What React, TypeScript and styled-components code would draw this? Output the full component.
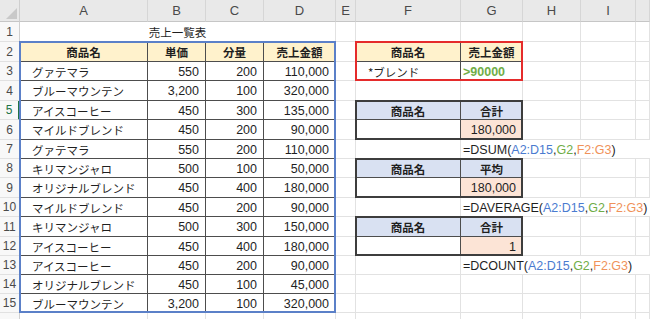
import React from "react";
import styled, { createGlobalStyle } from "styled-components";

const COL_WIDTHS = [20, 128, 58, 58, 72, 20, 105, 62, 58, 55];
const ROW_HEIGHTS = [20, 20, 19, 20, 19, 20, 19, 19, 20, 19, 20, 19, 19, 19, 19, 20];
const LETTERS = ["A", "B", "C", "D", "E", "F", "G", "H", "I", "J"];
const ACTIVE_ROW = 5;

// grid column for a sheet column letter (column 1 is the row header)
const col = (letter: string) => LETTERS.indexOf(letter) + 2;

const sales: [string, string, string, string][] = [
	["グァテマラ", "550", "200", "110,000"],
	["ブルーマウンテン", "3,200", "100", "320,000"],
	["アイスコーヒー", "450", "300", "135,000"],
	["マイルドブレンド", "450", "200", "90,000"],
	["グァテマラ", "550", "200", "110,000"],
	["キリマンジャロ", "500", "100", "50,000"],
	["オリジナルブレンド", "450", "400", "180,000"],
	["マイルドブレンド", "450", "200", "90,000"],
	["キリマンジャロ", "500", "300", "150,000"],
	["アイスコーヒー", "450", "400", "180,000"],
	["アイスコーヒー", "450", "200", "90,000"],
	["オリジナルブレンド", "450", "100", "45,000"],
	["ブルーマウンテン", "3,200", "100", "320,000"],
];

const summaries = [
	{ row: 5, label: "合計", value: "180,000", fn: "DSUM" },
	{ row: 8, label: "平均", value: "180,000", fn: "DAVERAGE" },
	{ row: 11, label: "合計", value: "1", fn: "DCOUNT" },
];

function App() {
	const gridCells = [];
	for (let r = 1; r <= ROW_HEIGHTS.length; r++) {
		for (let c = 0; c < LETTERS.length; c++) {
			gridCells.push(<GridCell key={`g${r}-${c}`} $col={c + 2} $row={r} />);
		}
	}

	return (
		<>
			<GlobalStyle />
			<Sheet>
				<Corner />
				{LETTERS.map((l, i) => (
					<ColHeader key={l} $col={i + 2}>
						{l === "J" ? "" : l}
					</ColHeader>
				))}
				{ROW_HEIGHTS.map((_, i) => (
					<RowHeader key={i} $row={i + 1} $active={i + 1 === ACTIVE_ROW}>
						{i + 1 <= 15 ? i + 1 : ""}
					</RowHeader>
				))}
				{gridCells}

				<Cell $col={col("A")} $row={1} $span={4} $align="center" $jp>
					売上一覧表
				</Cell>

				{["商品名", "単価", "分量", "売上金額"].map((h, i) => (
					<Cell key={h} $col={col("A") + i} $row={2} $align="center" $bold $jp $fill="#fff2cc" $line>
						{h}
					</Cell>
				))}
				{sales.map((s, r) => (
					<React.Fragment key={r}>
						<Cell $col={col("A")} $row={r + 3} $indent $jp $line>
							{s[0]}
						</Cell>
						{s.slice(1).map((v, i) => (
							<Cell key={i} $col={col("B") + i} $row={r + 3} $align="right" $line>
								{v}
							</Cell>
						))}
					</React.Fragment>
				))}
				<Box $col={col("A")} $row={2} $cols={4} $rows={14} $color="#5b80c8" />

				<Cell $col={col("F")} $row={2} $align="center" $bold $jp $fill="#fff2cc" $line>
					商品名
				</Cell>
				<Cell $col={col("G")} $row={2} $align="center" $bold $jp $fill="#fff2cc" $line>
					売上金額
				</Cell>
				<Cell $col={col("F")} $row={3} $indent $jp $line>
					*ブレンド
				</Cell>
				<Cell $col={col("G")} $row={3} $bold $color="#70ad47" $line>
					&gt;90000
				</Cell>
				<Box $col={col("F")} $row={2} $cols={2} $rows={2} $color="#e52b2b" />

				{summaries.map((s) => (
					<React.Fragment key={s.row}>
						<Cell $col={col("F")} $row={s.row} $align="center" $bold $jp $fill="#d9e1f2" $line>
							商品名
						</Cell>
						<Cell $col={col("G")} $row={s.row} $align="center" $bold $jp $fill="#d9e1f2" $line>
							{s.label}
						</Cell>
						<Cell $col={col("F")} $row={s.row + 1} $line />
						<Cell $col={col("G")} $row={s.row + 1} $align="right" $fill="#fce4d6" $line>
							{s.value}
						</Cell>
						<Box $col={col("F")} $row={s.row} $cols={2} $rows={2} $color="#3d3d3d" />
						<Formula $row={s.row + 2}>
							={s.fn}(<Ref $color="#4a7bd0">A2:D15</Ref>,<Ref $color="#70ad47">G2</Ref>,
							<Ref $color="#f0925a">F2:G3</Ref>)
						</Formula>
					</React.Fragment>
				))}
			</Sheet>
		</>
	);
}

const GlobalStyle = createGlobalStyle`
	html, body {
		margin: 0;
		padding: 0;
		background: #ffffff;
		overflow: hidden;
	}
`;

const Sheet = styled.div`
	display: grid;
	width: 650px;
	grid-template-columns: ${COL_WIDTHS.map((w) => `${w}px`).join(" ")} 1fr;
	grid-template-rows: 22px ${ROW_HEIGHTS.map((h) => `${h}px`).join(" ")};
	font-family: "Liberation Sans", "Noto Sans CJK JP", sans-serif;
	font-size: 12.5px;
	color: #1f1f1f;
	box-sizing: border-box;

	& * {
		box-sizing: border-box;
	}
`;

const Corner = styled.div`
	grid-column: 1;
	grid-row: 1;
	background: #e9e9e9;
	border-right: 1px solid #cfcfcf;
	border-bottom: 1px solid #c6c6c6;
	position: relative;

	&::after {
		content: "";
		position: absolute;
		right: 2px;
		bottom: 2px;
		width: 11px;
		height: 11px;
		background: #c9c9c9;
		clip-path: polygon(100% 0, 100% 100%, 0 100%);
	}
`;

const ColHeader = styled.div<{ $col: number }>`
	grid-column: ${(p) => p.$col};
	grid-row: 1;
	display: flex;
	align-items: center;
	justify-content: center;
	background: #e9e9e9;
	border-right: 1px solid #d6d6d6;
	border-bottom: 1px solid #c6c6c6;
	color: #4a4a4a;
	font-size: 13px;
`;

const RowHeader = styled.div<{ $row: number; $active: boolean }>`
	grid-column: 1;
	grid-row: ${(p) => p.$row + 1};
	display: flex;
	align-items: center;
	justify-content: center;
	background: #f8f8f8;
	border-bottom: 1px solid #e1e1e1;
	border-right: ${(p) => (p.$active ? "2px solid #217346" : "1px solid #cfcfcf")};
	color: ${(p) => (p.$active ? "#217346" : "#4a4a4a")};
	font-size: 12px;
`;

const GridCell = styled.div<{ $col: number; $row: number }>`
	grid-column: ${(p) => p.$col};
	grid-row: ${(p) => p.$row + 1};
	border-right: 1px solid #e2e2e2;
	border-bottom: 1px solid #e2e2e2;
`;

const Cell = styled.div<{
	$col: number;
	$row: number;
	$span?: number;
	$align?: "left" | "center" | "right";
	$bold?: boolean;
	$jp?: boolean;
	$indent?: boolean;
	$fill?: string;
	$color?: string;
	$line?: boolean;
}>`
	grid-column: ${(p) => p.$col} / span ${(p) => p.$span ?? 1};
	grid-row: ${(p) => p.$row + 1};
	display: flex;
	align-items: center;
	justify-content: ${(p) =>
		p.$align === "center" ? "center" : p.$align === "right" ? "flex-end" : "flex-start"};
	padding: 1px ${(p) => (p.$align === "right" ? "6px" : "2px")} 0
		${(p) => (p.$indent ? "12px" : "2px")};
	background: ${(p) => p.$fill ?? "#ffffff"};
	border-right: 1px solid ${(p) => (p.$line ? "#4d4d4d" : "#e2e2e2")};
	border-bottom: 1px solid ${(p) => (p.$line ? "#4d4d4d" : "#ffffff")};
	color: ${(p) => p.$color ?? "#1f1f1f"};
	font-family: ${(p) =>
		p.$jp ? `"Noto Sans CJK JP", sans-serif` : `"Liberation Sans", "Noto Sans CJK JP", sans-serif`};
	font-size: ${(p) => (p.$jp ? "11.5px" : "12.5px")};
	font-weight: ${(p) => (p.$bold ? 700 : 400)};
	white-space: nowrap;
	z-index: 1;
`;

const Box = styled.div<{ $col: number; $row: number; $cols: number; $rows: number; $color: string }>`
	grid-column: ${(p) => p.$col} / span ${(p) => p.$cols};
	grid-row: ${(p) => p.$row + 1} / span ${(p) => p.$rows};
	margin: -1px 0 0 -1px;
	border: 2px solid ${(p) => p.$color};
	pointer-events: none;
	z-index: 2;
`;

const Formula = styled.div<{ $row: number }>`
	grid-column: ${col("G")} / -1;
	grid-row: ${(p) => p.$row + 1};
	display: flex;
	align-items: center;
	padding: 1px 0 0 2px;
	background: #ffffff;
	border-bottom: 1px solid #e2e2e2;
	white-space: nowrap;
	font-size: 12.5px;
	color: #1f1f1f;
	z-index: 1;
`;

const Ref = styled.span<{ $color: string }>`
	color: ${(p) => p.$color};
`;

export default App;
